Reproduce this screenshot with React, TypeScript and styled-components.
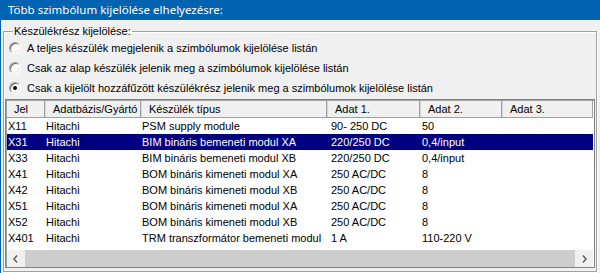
import React from "react";
import styled, { createGlobalStyle } from "styled-components";

const Global = createGlobalStyle`
  html, body { margin: 0; padding: 0; background: #f0f0f0; }
  body { font-family: "Liberation Sans", Arial, sans-serif; font-size: 11px; color: #000; }
  * { box-sizing: border-box; }
`;

const Window = styled.div`
  width: 600px;
  height: 273px;
  overflow: hidden;
  display: flex;
  flex-direction: column;
  background: #f0f0f0;
  border-left: 1px solid #0063b1;
`;

const TitleBar = styled.div`
  height: 20px;
  flex: none;
  background: #0063b1;
  color: #fff;
  font-family: "Noto Sans", "Open Sans", sans-serif;
  font-size: 11.5px;
  line-height: 20px;
  padding-left: 8px;
  margin-left: -1px;
  white-space: nowrap;
`;

const Body = styled.div`
  flex: 1;
  display: flex;
  flex-direction: column;
  padding: 5px 3px 0 2px;
`;

const Group = styled.fieldset`
  margin: 0;
  padding: 0 1px 2px 1px;
  border: 1px solid #a0a0a0;
  box-shadow: inset 1px 1px 0 #fff, 1px 1px 0 #fff;
  min-width: 0;
  height: 247px;
  display: flex;
  flex-direction: column;
`;

const Legend = styled.legend`
  margin-left: 8px;
  padding: 0 1px;
  line-height: 13px;
  font-size: 11px;
`;

const RadioList = styled.div`
  display: flex;
  flex-direction: column;
  padding-left: 4px;
  margin-bottom: 1px;
`;

const RadioRow = styled.label`
  display: flex;
  align-items: center;
  height: 20px;
  gap: 6px;
  white-space: nowrap;
`;

const RadioCircle = styled.span<{ $checked?: boolean }>`
  position: relative;
  width: 12px;
  height: 12px;
  flex: none;
  border-radius: 50%;
  background: #fff;
  border: 1px solid;
  border-color: #a0a0a0 #ffffff #ffffff #a0a0a0;
  box-shadow: inset 1px 1px 0 #696969, inset -1px -1px 0 #e3e3e3;
  &::after {
    content: "";
    display: ${(p) => (p.$checked ? "block" : "none")};
    position: absolute;
    left: 3px;
    top: 3px;
    width: 4px;
    height: 4px;
    border-radius: 50%;
    background: #000;
  }
`;

const ListView = styled.div`
  height: 169px;
  display: flex;
  flex-direction: column;
  background: #fff;
  border: 1px solid #828282;
  box-shadow: inset 1px 1px 0 #a0a0a0;
  padding: 1px 1px 0 1px;
  overflow: hidden;
`;

const HeaderRow = styled.div`
  display: flex;
  height: 17px;
  flex: none;
  background: #f0f0f0;
  border-bottom: 1px solid #a0a0a0;
`;

const HeaderCell = styled.div<{ $w?: number }>`
  ${(p) => (p.$w ? `width: ${p.$w}px; flex: none;` : "flex: 1;")}
  line-height: 16px;
  padding-left: 7px;
  white-space: nowrap;
  overflow: hidden;
  border-right: 1px solid #d5d5d5;
  box-shadow: inset -1px 0 0 #a0a0a0;
  &:last-child { border-right: none; }
`;

const Rows = styled.div`
  flex: 1;
  overflow: hidden;
`;

const Row = styled.div<{ $selected?: boolean }>`
  display: flex;
  height: 16px;
  background: ${(p) => (p.$selected ? "#000080" : "transparent")};
  color: ${(p) => (p.$selected ? "#fff" : "#000")};
`;

const Cell = styled.div<{ $w?: number; $pad: number }>`
  ${(p) => (p.$w ? `width: ${p.$w}px; flex: none;` : "flex: 1;")}
  padding-left: ${(p) => p.$pad}px;
  line-height: 16px;
  white-space: pre;
  overflow: hidden;
`;

const HScroll = styled.div`
  height: 17px;
  flex: none;
  display: flex;
  background: #f0f0f0;
`;

const ScrollButton = styled.div`
  width: 17px;
  flex: none;
  display: flex;
  align-items: center;
  justify-content: center;
  background: #f0f0f0;
`;

const ScrollTrack = styled.div`
  flex: 1;
  display: flex;
  padding: 0 1px;
`;

const Thumb = styled.div`
  flex: 1;
  background: #cdcdcd;
`;

const columns = [
  { title: "Jel", w: 39, pad: 1 },
  { title: "Adatbázis/Gyártó", w: 96, pad: 0 },
  { title: "Készülék típus", w: 186, pad: 0 },
  { title: "Adat 1.", w: 93, pad: 3 },
  { title: "Adat 2.", w: 82, pad: 1 },
  { title: "Adat 3.", w: 0, pad: 1 },
];

const rows = [
  ["X11", "Hitachi", "PSM supply module", "90- 250 DC", "50", ""],
  ["X31", "Hitachi", "BIM bináris bemeneti modul XA", "220/250 DC", "0,4/input", ""],
  ["X33", "Hitachi", "BIM bináris bemeneti modul XB", "220/250 DC", "0,4/input", ""],
  ["X41", "Hitachi", "BOM bináris kimeneti modul XA", "250 AC/DC", "8", ""],
  ["X42", "Hitachi", "BOM bináris kimeneti modul XB", "250 AC/DC", "8", ""],
  ["X51", "Hitachi", "BOM bináris kimeneti modul XA", "250 AC/DC", "8", ""],
  ["X52", "Hitachi", "BOM bináris kimeneti modul XB", "250 AC/DC", "8", ""],
  ["X401", "Hitachi", "TRM transzformátor bemeneti modul", "1 A", "110-220 V", ""],
];

const options = [
  { label: "A teljes készülék megjelenik a szimbólumok kijelölése listán", checked: false },
  { label: "Csak az alap készülék jelenik meg a szimbólumok kijelölése listán", checked: false },
  { label: "Csak a kijelölt hozzáfűzött készülékrész jelenik meg a szimbólumok kijelölése listán", checked: true },
];

const Chevron = ({ dir }: { dir: "left" | "right" }) => (
  <svg width="5" height="8" viewBox="0 0 5 8">
    <polyline
      points={dir === "left" ? "4,0.5 1,4 4,7.5" : "1,0.5 4,4 1,7.5"}
      fill="none"
      stroke="#606060"
      strokeWidth="1.5"
    />
  </svg>
);

export default function App() {
  return (
    <>
      <Global />
      <Window>
        <TitleBar>Több szimbólum kijelölése elhelyezésre:</TitleBar>
        <Body>
          <Group>
            <Legend>Készülékrész kijelölése:</Legend>
            <RadioList>
              {options.map((o) => (
                <RadioRow key={o.label}>
                  <RadioCircle $checked={o.checked} />
                  {o.label}
                </RadioRow>
              ))}
            </RadioList>
            <ListView>
              <HeaderRow>
                {columns.map((c) => (
                  <HeaderCell key={c.title} $w={c.w || undefined}>
                    {c.title}
                  </HeaderCell>
                ))}
              </HeaderRow>
              <Rows>
                {rows.map((r, i) => (
                  <Row key={r[0]} $selected={i === 1}>
                    {r.map((v, j) => (
                      <Cell key={j} $w={columns[j].w || undefined} $pad={columns[j].pad}>
                        {v}
                      </Cell>
                    ))}
                  </Row>
                ))}
              </Rows>
              <HScroll>
                <ScrollButton>
                  <Chevron dir="left" />
                </ScrollButton>
                <ScrollTrack>
                  <Thumb />
                </ScrollTrack>
                <ScrollButton>
                  <Chevron dir="right" />
                </ScrollButton>
              </HScroll>
            </ListView>
          </Group>
        </Body>
      </Window>
    </>
  );
}
